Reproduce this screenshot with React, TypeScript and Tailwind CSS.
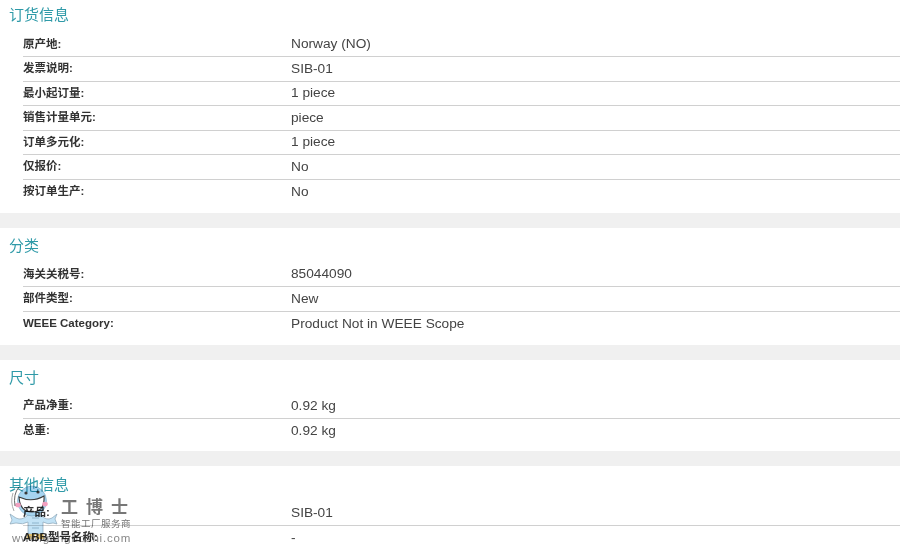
const sections = [
  {
    title: "订货信息",
    pad: "pt-[3px] pb-[9px]",
    gap: "mt-[5.5px]",
    rows: [
      ["原产地:", "Norway (NO)"],
      ["发票说明:", "SIB-01"],
      ["最小起订量:", "1 piece"],
      ["销售计量单元:", "piece"],
      ["订单多元化:", "1 piece"],
      ["仅报价:", "No"],
      ["按订单生产:", "No"],
    ],
  },
  {
    title: "分类",
    pad: "pt-[6px] pb-[9px]",
    gap: "mt-[5px]",
    rows: [
      ["海关关税号:", "85044090"],
      ["部件类型:", "New"],
      ["WEEE Category:", "Product Not in WEEE Scope"],
    ],
  },
  {
    title: "尺寸",
    pad: "pt-[6px] pb-[8px]",
    gap: "mt-[4.5px]",
    rows: [
      ["产品净重:", "0.92 kg"],
      ["总重:", "0.92 kg"],
    ],
  },
  {
    title: "其他信息",
    pad: "pt-[7px]",
    gap: "mt-[4.5px]",
    rows: [
      ["产品:", "SIB-01"],
      ["ABB型号名称:", "-"],
    ],
  },
];

function Mascot() {
  return (
    <svg width="50" height="62" viewBox="0 0 50 62" className="shrink-0">
      {/* arms and body */}
      <path d="M20 31 Q14 37 8 34 L2 30 L4 36 L2 40 L8 39 Q15 41 20 38 L20 50 L35 50 L35 38 Q40 41 45 39 L49 40 L47 35 L49 30 L44 34 Q38 37 33 31 Z" fill="#c2e2f5" stroke="#7d99ab" strokeWidth="0.6" />
      <path d="M24 34 L31 34 M24 39 L31 39 M24 44 L31 44" stroke="#8db4cc" strokeWidth="1" />
      <path d="M20 50 L27 50 L26 55 L18 55 Z" fill="#dcbc6c" />
      <path d="M28 50 L35 50 L37 55 L28 55 Z" fill="#dcbc6c" />
      {/* head */}
      <ellipse cx="24" cy="17" rx="14.5" ry="15" fill="#a6d4f0" stroke="#7ba6c0" strokeWidth="0.6" />
      <path d="M11 13 Q24 19 36 12 Q37 28 24 28 Q12 28 11 13 Z" fill="#ffffff" stroke="#3a3a3a" strokeWidth="1.1" />
      <circle cx="18" cy="9" r="1.6" fill="#3a3a3a" />
      <circle cx="30" cy="8" r="1.6" fill="#3a3a3a" />
      <ellipse cx="10" cy="21" rx="2.8" ry="2.3" fill="#f2a0c0" />
      <ellipse cx="37" cy="20" rx="2.8" ry="2.3" fill="#f2a0c0" />
      {/* hair strokes at the left */}
      <path d="M11 3 Q5 10 7 22" fill="none" stroke="#666666" strokeWidth="1" />
      <path d="M5 9 Q2 18 6 27" fill="none" stroke="#aaaaaa" strokeWidth="1" />
    </svg>
  );
}

export default function App() {
  return (
    <div className="relative h-[559px] w-[900px] overflow-hidden bg-white font-['Liberation_Sans','Noto_Sans_CJK_SC',sans-serif]">
      {sections.map((section, i) => (
        <div key={section.title}>
          <section className={section.pad}>
            <h2 className="pl-[9px] text-[15px] leading-6 font-normal text-[#2f9aa8]">{section.title}</h2>
            <div className={`${section.gap} ml-[23px]`}>
              {section.rows.map(([label, value], j) => (
                <div
                  key={label}
                  className={`grid h-[24.5px] grid-cols-[268px_1fr] items-center ${j < section.rows.length - 1 ? "border-b border-[#d0d0d0]" : ""}`}
                >
                  <span className="text-[11.5px] font-bold text-[#333333]">{label}</span>
                  <span className="pt-px text-[13.7px] text-[#444444]">{value}</span>
                </div>
              ))}
            </div>
          </section>
          {i < sections.length - 1 && <div className="h-[14.5px] bg-[#f0f0f0]" />}
        </div>
      ))}

      {/* watermark logo over the last section */}
      <div className="absolute top-[484px] left-[8px] w-[125px] mix-blend-multiply">
        <div className="flex">
          <Mascot />
          <div className="flex flex-col pt-[10px] pl-[3px] whitespace-nowrap text-[#777777]">
            <span className="font-['Noto_Sans_CJK_SC',serif] text-[17px] leading-6 font-bold tracking-[8px]">工博士</span>
            <span className="text-[9.5px] leading-3 tracking-[0.5px]">智能工厂服务商</span>
          </div>
        </div>
        <p className="-mt-[16px] pl-[4px] text-[11.5px] leading-4 tracking-[0.8px] whitespace-nowrap text-[#888888]">www.gongboshi.com</p>
      </div>
    </div>
  );
}
